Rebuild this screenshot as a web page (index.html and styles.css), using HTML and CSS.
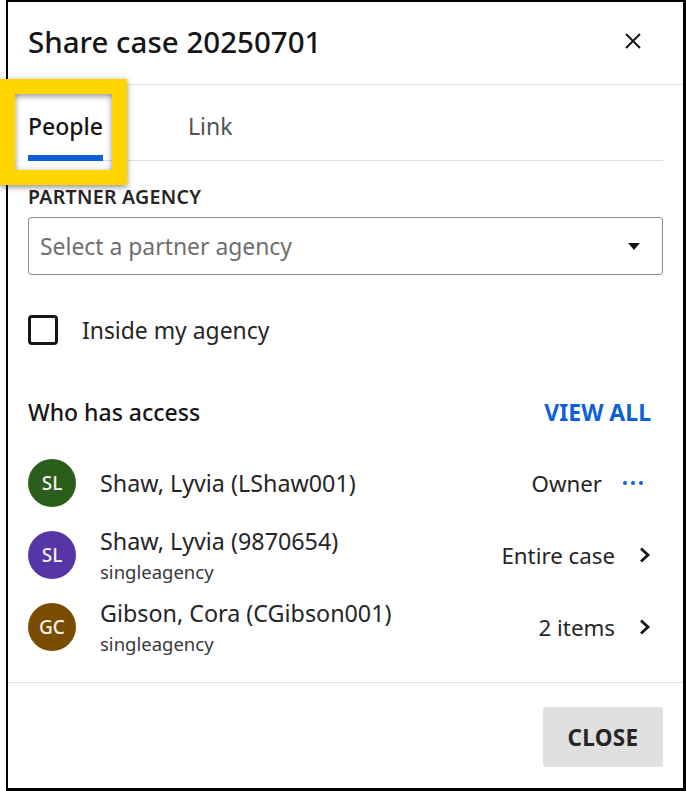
FILE: index.html
```html
<!DOCTYPE html>
<html>
<head>
<meta charset="utf-8">
<link rel="stylesheet" href="styles.css">
</head>
<body>
<div class="dialog">
  <div class="header">
    <h1 class="title">Share case 20250701</h1>
    <button class="icon-btn" aria-label="Close">
      <svg width="16" height="16" viewBox="0 0 16 16"><path d="M1 1L15 15M15 1L1 15" stroke="#161616" stroke-width="2" fill="none"/></svg>
    </button>
  </div>
  <div class="body">
    <div class="tabs">
      <div class="tab active">People</div>
      <div class="tab">Link</div>
    </div>
    <div class="field-label">PARTNER AGENCY</div>
    <div class="select">
      <span class="placeholder">Select a partner agency</span>
      <svg width="12" height="7" viewBox="0 0 12 7"><path d="M0 0H12L6 7Z" fill="#161616"/></svg>
    </div>
    <label class="checkbox-row">
      <span class="checkbox"></span>
      <span class="checkbox-label">Inside my agency</span>
    </label>
    <div class="access-head">
      <span class="access-title">Who has access</span>
      <span class="view-all">VIEW ALL</span>
    </div>
    <ul class="people">
      <li class="person">
        <span class="avatar green">SL</span>
        <div class="info"><div class="name">Shaw, Lyvia (LShaw001)</div></div>
        <span class="role">Owner</span>
        <span class="more"><svg width="20" height="4" viewBox="0 0 20 4"><circle cx="2" cy="2" r="2" fill="#0f5fd6"/><circle cx="10" cy="2" r="2" fill="#0f5fd6"/><circle cx="18" cy="2" r="2" fill="#0f5fd6"/></svg></span>
      </li>
      <li class="person">
        <span class="avatar purple">SL</span>
        <div class="info"><div class="name">Shaw, Lyvia (9870654)</div><div class="sub">singleagency</div></div>
        <span class="role">Entire case</span>
        <span class="chev"><svg width="12" height="16" viewBox="0 0 12 16"><path d="M2 1.5L9 8L2 14.5" stroke="#161616" stroke-width="2.8" fill="none"/></svg></span>
      </li>
      <li class="person">
        <span class="avatar brown">GC</span>
        <div class="info"><div class="name">Gibson, Cora (CGibson001)</div><div class="sub">singleagency</div></div>
        <span class="role">2 items</span>
        <span class="chev"><svg width="12" height="16" viewBox="0 0 12 16"><path d="M2 1.5L9 8L2 14.5" stroke="#161616" stroke-width="2.8" fill="none"/></svg></span>
      </li>
    </ul>
  </div>
  <div class="footer">
    <button class="close-btn">CLOSE</button>
  </div>
</div>
<div class="highlight"></div>
</body>
</html>
```
FILE: styles.css
```css
* { box-sizing: border-box; }
html, body { margin: 0; padding: 0; background: #fff; }
body {
  font-family: "Noto Sans", "Open Sans", sans-serif;
  color: #161616;
  width: 686px;
  height: 791px;
  overflow: hidden;
  position: relative;
}
.dialog {
  margin-left: 6px;
  width: 680px;
  height: 791px;
  border: 2px solid #000;
  border-right-width: 3px;
  border-bottom-width: 3px;
  display: flex;
  flex-direction: column;
  background: #fff;
}
.header {
  height: 83px;
  flex: none;
  border-bottom: 1px solid #e0e0e0;
  display: flex;
  align-items: center;
  justify-content: space-between;
  padding: 0 42px 2px 20px;
}
.title {
  margin: 0;
  font-size: 29.5px;
  font-weight: 500;
  line-height: 36px;
  letter-spacing: 0;
}
.icon-btn {
  border: 0;
  background: none;
  padding: 0;
  width: 16px;
  height: 16px;
  display: flex;
  margin-top: -3px;
}
.body {
  padding: 0 20px;
  flex: 1;
}
.tabs {
  height: 76px;
  border-bottom: 1px solid #e0e0e0;
  display: flex;
  gap: 85px;
  align-items: stretch;
}
.tab {
  font-size: 23px;
  color: #525252;
  display: flex;
  align-items: center;
  padding-top: 11px;
  border-bottom: 6px solid transparent;
  margin-bottom: -1px;
}
.tab.active {
  color: #161616;
  font-weight: 500;
  border-bottom-color: #0f5fd6;
}
.field-label {
  margin-top: 26px;
  font-size: 19.5px;
  font-weight: 600;
  letter-spacing: 0.3px;
  line-height: 20px;
  color: #262626;
}
.select {
  margin-top: 10px;
  height: 58px;
  border: 1px solid #8d8d8d;
  border-radius: 3px;
  display: flex;
  align-items: center;
  justify-content: space-between;
  padding: 0 22px 0 11px;
}
.placeholder {
  font-size: 22.9px;
  color: #6f6f6f;
}
.checkbox-row {
  margin-top: 40px;
  display: flex;
  align-items: center;
  gap: 24px;
  height: 30px;
}
.checkbox {
  width: 30px;
  height: 30px;
  border: 3px solid #161616;
  border-radius: 4px;
  flex: none;
}
.checkbox-label {
  font-size: 22.9px;
  color: #262626;
}
.access-head {
  margin-top: 52px;
  height: 30px;
  display: flex;
  align-items: center;
  justify-content: space-between;
  padding-right: 12px;
}
.access-title {
  font-size: 23px;
  font-weight: 500;
}
.view-all {
  font-size: 23px;
  font-weight: 700;
  color: #0f5fd6;
}
.people {
  list-style: none;
  margin: 20px 0 0;
  padding: 0;
}
.person {
  height: 72px;
  display: flex;
  align-items: center;
}
.avatar {
  width: 48px;
  height: 48px;
  border-radius: 50%;
  flex: none;
  display: flex;
  align-items: center;
  justify-content: center;
  color: #f4f4f4;
  font-size: 19px;
  font-weight: 500;
  margin-right: 24px;
}
.avatar.green { background: #2c5e1b; }
.avatar.purple { background: #5636a6; }
.avatar.brown { background: #7a4c00; }
.info { flex: 1; }
.name {
  font-size: 23.3px;
  line-height: 30px;
  color: #262626;
}
.sub {
  font-size: 18.5px;
  line-height: 28px;
  margin-top: 2px;
  margin-bottom: -2px;
  color: #393939;
}
.role {
  font-size: 22.3px;
  color: #262626;
}
.more {
  display: flex;
  margin-left: 21px;
  margin-right: 20px;
}
.chev {
  display: flex;
  margin-left: 24px;
  margin-right: 12px;
}
.footer {
  flex: none;
  height: 106px;
  border-top: 1px solid #e0e0e0;
  display: flex;
  justify-content: flex-end;
  align-items: flex-start;
  padding: 24px 20px 0 0;
}
.close-btn {
  width: 120px;
  height: 60px;
  border: 0;
  border-radius: 3px;
  background: #e0e0e0;
  font-family: inherit;
  font-size: 22.5px;
  font-weight: 700;
  color: #262626;
  letter-spacing: 0.3px;
}
.highlight {
  position: absolute;
  left: 0;
  top: 79px;
  width: 127px;
  height: 106px;
  border: 15px solid #ffd500;
  box-shadow: 0 2px 6px rgba(0,0,0,0.45), inset 0 2px 6px rgba(0,0,0,0.45);
}
```
